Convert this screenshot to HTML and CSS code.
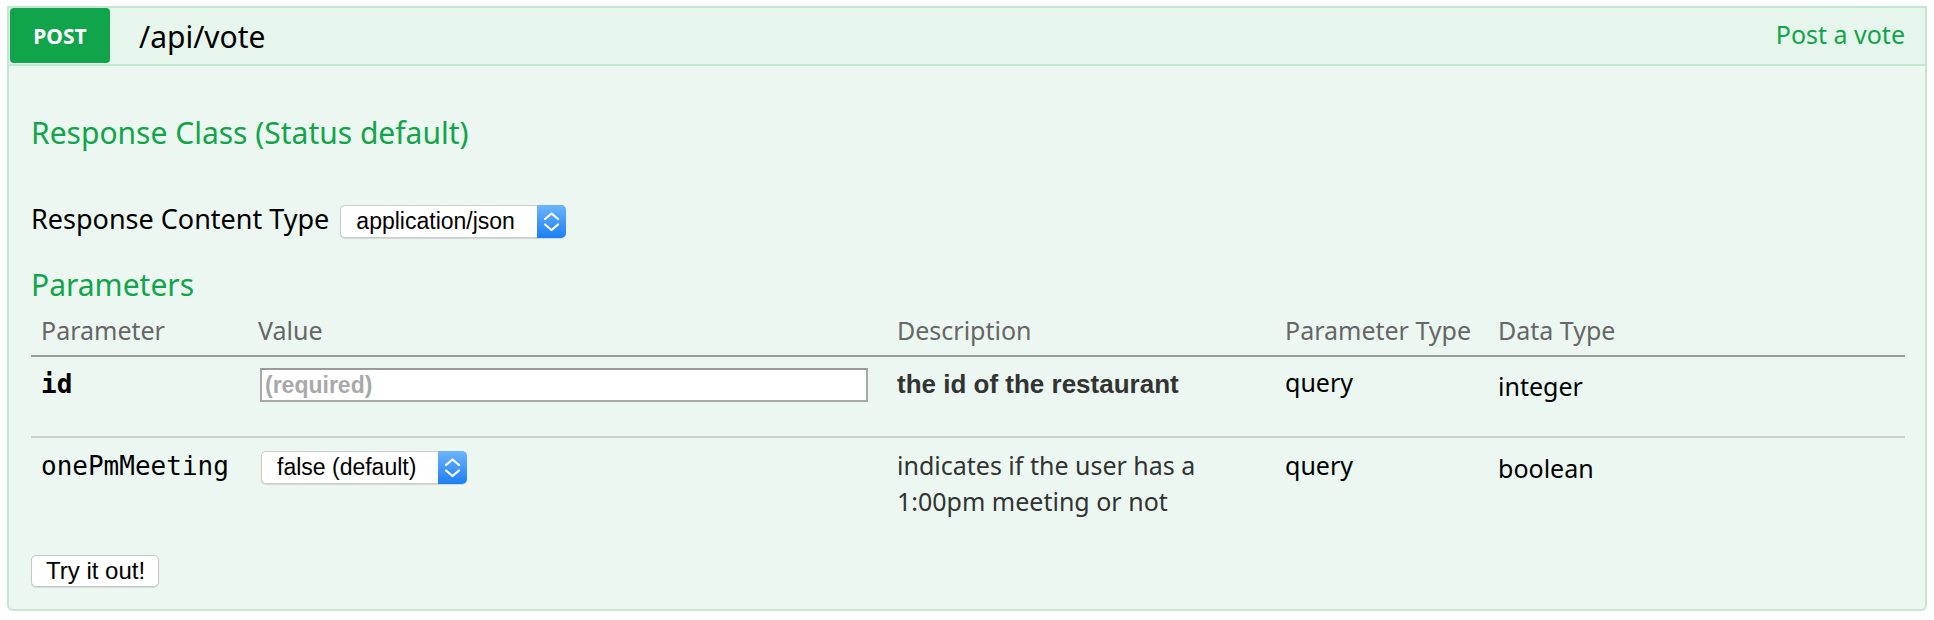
FILE: index.html
```html
<!DOCTYPE html>
<html lang="en">
<head>
<meta charset="utf-8">
<title>POST /api/vote</title>
<link rel="stylesheet" href="styles.css">
</head>
<body>
<div class="page">
  <div class="operation">
    <div class="heading">
      <span class="method">POST</span>
      <span class="path">/api/vote</span>
      <span class="summary">Post a vote</span>
    </div>
    <div class="content">
      <h4 class="section-title title-response">Response Class (Status default)</h4>
      <div class="content-type">
        <span class="ct-label">Response Content Type</span>
        <span class="select select-ct">
          <span class="select-value">application/json</span>
          <span class="select-arrow"><svg width="29" height="33" viewBox="0 0 29 33"><polyline points="8,14 14.5,8.5 21,14" fill="none" stroke="#fff" stroke-width="2.2" stroke-linecap="round" stroke-linejoin="round"/><polyline points="8,19.5 14.5,25 21,19.5" fill="none" stroke="#fff" stroke-width="2.2" stroke-linecap="round" stroke-linejoin="round"/></svg></span>
        </span>
      </div>
      <h4 class="section-title title-params">Parameters</h4>
      <div class="params">
        <div class="prow phead">
          <div class="pcell">Parameter</div>
          <div class="pcell">Value</div>
          <div class="pcell">Description</div>
          <div class="pcell">Parameter Type</div>
          <div class="pcell">Data Type</div>
        </div>
        <div class="prow row1">
          <div class="pcell pname pname-req">id</div>
          <div class="pcell"><input class="pinput" type="text" placeholder="(required)"></div>
          <div class="pcell pdesc-strong">the id of the restaurant</div>
          <div class="pcell ptype ptype-1">query</div>
          <div class="pcell pdata pdata-1">integer</div>
        </div>
        <div class="prow row2">
          <div class="pcell pname pname-opt">onePmMeeting</div>
          <div class="pcell"><span class="select select-bool">
            <span class="select-value">false (default)</span>
            <span class="select-arrow"><svg width="29" height="33" viewBox="0 0 29 33"><polyline points="8,14 14.5,8.5 21,14" fill="none" stroke="#fff" stroke-width="2.2" stroke-linecap="round" stroke-linejoin="round"/><polyline points="8,19.5 14.5,25 21,19.5" fill="none" stroke="#fff" stroke-width="2.2" stroke-linecap="round" stroke-linejoin="round"/></svg></span>
          </span></div>
          <div class="pcell pdesc">indicates if the user has a 1:00pm meeting or not</div>
          <div class="pcell ptype ptype-2">query</div>
          <div class="pcell pdata pdata-2">boolean</div>
        </div>
      </div>
      <button class="try" type="button">Try it out!</button>
    </div>
  </div>
</div>
</body>
</html>
```
FILE: styles.css
```css
* { box-sizing: border-box; }
body {
  margin: 0;
  background: #fff;
  font-family: "Noto Sans", "Open Sans", sans-serif;
  color: #000;
}
.page { padding: 6px 7px 0 7px; }

.heading {
  display: flex;
  align-items: center;
  height: 60px;
  border: 2px solid #c3e8d1;
  background: #e7f6ec;
  padding: 0 20px 0 1px;
}
.method {
  align-self: flex-start;
  width: 100px;
  height: 55px;
  background: #10a54a;
  color: #fff;
  font-weight: 700;
  font-size: 21px;
  border-radius: 4px;
  display: flex;
  align-items: center;
  justify-content: center;
}
.path {
  margin-left: 29px;
  font-size: 30px;
  color: #000;
}
.summary {
  margin-left: auto;
  font-size: 25px;
  color: #10a54a;
  padding-bottom: 5px;
}

.content {
  background: #ebf7f0;
  border: 2px solid #c3e8d1;
  border-top: none;
  border-radius: 0 0 6px 6px;
  padding: 49px 20px 22px 22px;
}
.section-title {
  margin: 0;
  font-size: 30px;
  line-height: 36px;
  font-weight: 400;
  color: #10a54a;
}
.content-type {
  display: flex;
  align-items: flex-start;
  margin-top: 54px;
}
.ct-label {
  font-size: 27px;
  line-height: 27px;
  margin-right: 11px;
}
.select {
  display: inline-flex;
  height: 33px;
  border: 1px solid #cbcbcb;
  border-right: none;
  border-radius: 5px;
  background: #fff;
  box-shadow: 0 1px 1px rgba(0, 0, 0, 0.12);
  font-family: "Liberation Sans", Arial, sans-serif;
  font-size: 23px;
  color: #000;
}
.select-ct { width: 226px; }
.select-bool { width: 206px; margin-left: 3px; margin-top: 13px; }
.select-value {
  flex: 1;
  padding-left: 15px;
  line-height: 31px;
  white-space: nowrap;
}
.select-arrow {
  width: 29px;
  height: 33px;
  margin: -1px 0 -1px 0;
  border-radius: 0 5px 5px 0;
  background: linear-gradient(#6db4fb, #1c7ff5);
  display: flex;
}
.title-params { margin-top: 29px; }

.prow {
  display: grid;
  grid-template-columns: 217px 639px 388px 213px 1fr;
}
.pcell { padding: 0 10px; }
.phead {
  color: #666;
  font-size: 25px;
  line-height: 30px;
  padding: 12px 0 10px;
  border-bottom: 2px solid #9a9a9a;
}
.row1 {
  height: 81px;
  border-bottom: 2px solid #cfcfcf;
  align-items: start;
}
.row2 { align-items: start; }
.pname {
  font-family: "DejaVu Sans Mono", monospace;
  font-size: 26px;
  line-height: 32px;
}
.pname-req { font-weight: 700; margin-top: 11px; }
.pname-opt { margin-top: 12px; }
.pinput {
  display: block;
  margin: 11px 0 0 2px;
  width: 608px;
  height: 34px;
  background: #fff;
  border: 2px solid #a9a9a9;
  border-top-color: #9a9a9a;
  padding: 0 3px;
  font-family: "Liberation Sans", Arial, sans-serif;
  font-size: 23px;
  font-weight: 700;
  outline: none;
}
.pinput::placeholder { color: #a9a9a9; }
.pdesc-strong {
  font-family: "Liberation Sans", Arial, sans-serif;
  font-weight: 700;
  font-size: 26px;
  line-height: 32px;
  color: #333;
  margin-top: 11px;
}
.pdesc {
  font-size: 25px;
  line-height: 36px;
  color: #333;
  margin-top: 9px;
}
.ptype, .pdata {
  font-size: 25px;
  line-height: 32px;
}
.ptype-1 { margin-top: 9px; }
.pdata-1 { margin-top: 13px; }
.ptype-2 { margin-top: 11px; }
.pdata-2 { margin-top: 14px; }

.try {
  display: block;
  margin-top: 36px;
  width: 128px;
  height: 32px;
  background: #fff;
  border: 1px solid #c6c6c6;
  border-radius: 5px;
  box-shadow: 0 1px 1px rgba(0, 0, 0, 0.1);
  padding: 0 0 0 14px;
  text-align: left;
  font-family: "Liberation Sans", Arial, sans-serif;
  font-size: 24px;
  color: #000;
}
```
